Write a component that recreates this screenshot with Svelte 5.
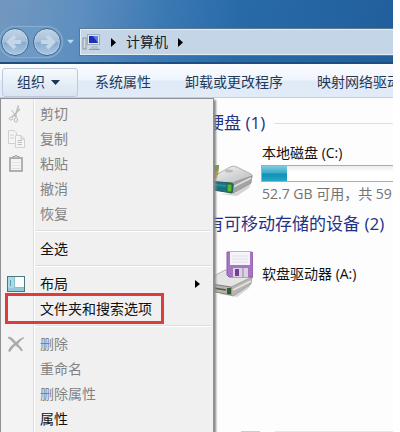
<script>
	let menuOpen = $state(true);

	const menu = [
		{ label: "剪切", icon: "cut", disabled: true },
		{ label: "复制", icon: "copy", disabled: true },
		{ label: "粘贴", icon: "paste", disabled: true },
		{ label: "撤消", disabled: true },
		{ label: "恢复", disabled: true },
		{ separator: true },
		{ label: "全选" },
		{ separator: true },
		{ label: "布局", icon: "layout", submenu: true },
		{ label: "文件夹和搜索选项", marked: true },
		{ separator: true },
		{ label: "删除", icon: "delete", disabled: true },
		{ label: "重命名", disabled: true },
		{ label: "删除属性", disabled: true },
		{ label: "属性" }
	];

	const commands = ["系统属性", "卸载或更改程序", "映射网络驱动"];

	let used = $state(19);
</script>

<div class="window">
	<header class="titlebar">
		<div class="nav-buttons">
			<button class="round" aria-label="后退">
				<svg width="20" height="20" viewBox="0 0 20 20"><path d="M10 4 L4 10 L10 16 M5 10 H16" /></svg>
			</button>
			<button class="round" aria-label="前进">
				<svg width="20" height="20" viewBox="0 0 20 20"><path d="M10 4 L16 10 L10 16 M15 10 H4" /></svg>
			</button>
		</div>
		<button class="history" aria-label="最近的页面">
			<svg width="9" height="6" viewBox="0 0 9 6"><path d="M0.5 0.5 H8.5 L4.5 5 Z" fill="#b9dcf3" stroke="#5c8fbd" stroke-width="0.6" /></svg>
		</button>
		<nav class="address">
			<svg width="19" height="18" viewBox="0 0 19 18">
				<rect x="1" y="5" width="3" height="11" fill="#d8dcd8" stroke="#7b8790" stroke-width="0.8" />
				<path d="M10 13 h5 l2 3 h-9 z" fill="#b5bfc8" />
				<rect x="5.5" y="1.5" width="12" height="10" fill="#dbe5ed" stroke="#9dacbd" />
				<rect x="7" y="3" width="9" height="7" fill="#1d2fb4" />
				<path d="M11 3 h5 v7 z" fill="#5c80e2" />
				<path d="M7 16.5 h11" stroke="#8f9ca8" />
			</svg>
			<svg width="5" height="9" viewBox="0 0 5 9"><path d="M0 0 L5 4.5 L0 9 Z" /></svg>
			<a href="#computer">计算机</a>
			<svg width="5" height="9" viewBox="0 0 5 9"><path d="M0 0 L5 4.5 L0 9 Z" /></svg>
		</nav>
	</header>

	<div class="toolbar">
		<button class="organize" aria-expanded={menuOpen} onclick={() => (menuOpen = !menuOpen)}>
			组织
			<svg width="9" height="5" viewBox="0 0 9 5"><path d="M0 0 H9 L4.5 5 Z" fill="#1d3554" /></svg>
		</button>
		{#each commands as command}
			<button class="command">{command}</button>
		{/each}
	</div>

	<main class="content">
		<section>
			<h2>硬盘 (1)<span class="rule"></span></h2>
			<div class="drive">
				<svg width="48" height="48" viewBox="0 0 48 48">
					<defs>
						<linearGradient id="metal" x1="0" y1="0" x2="1" y2="1">
							<stop offset="0" stop-color="#fafafa" />
							<stop offset="1" stop-color="#b5b8ba" />
						</linearGradient>
					</defs>
					<path d="M14 44 L31 43 L47 31 L44 38 L32 46 Z" fill="#d4d4d4" />
					<path d="M2 30 L25 17 Q28 15 32 17 L46 24 Q48 25 47 27 L27 34 L2 33 Z" fill="url(#metal)" stroke="#979a9c" stroke-width="0.7" />
					<path d="M27 33 L47 26 L46 33 L29 43 L26 43 Z" fill="#a2a4a6" stroke="#77797b" stroke-width="0.5" />
					<path d="M28 37 L46 28" stroke="#dfe0e1" stroke-width="1.5" />
					<path d="M2 31 L27 33 Q29 34 28 37 L27 43 L2 39 Z" fill="#197184" stroke="#285c65" />
					<path d="M3 34 L21 36" stroke="#2b8f9a" stroke-width="2" />
					<rect x="22" y="34" width="5" height="8" rx="1" fill="#57ba36" stroke="#23682b" />
					<ellipse cx="24" cy="21" rx="4" ry="1.5" fill="#bbb" />
					<path d="M1 16 L14 15 L13 25 L2 28 Z" fill="#668c2d" />
					<path d="M7 16 L14 15 L13 21 L7 22 Z" fill="#7f9c45" />
					<path d="M7 23 L13 21 L12 28 L7 29 Z" fill="#d9a13a" />
				</svg>
				<div class="info">
					<div class="name">本地磁盘 (C:)</div>
					<div class="usage"><div class="used" style="width: {used}%"></div></div>
					<div class="free">52.7 GB 可用，共 59</div>
				</div>
			</div>
		</section>
		<section>
			<h2>有可移动存储的设备 (2)</h2>
			<div class="drive floppy">
				<svg width="48" height="48" viewBox="0 0 48 48">
					<path d="M14 44 L31 43 L47 31 L44 38 L32 47 Z" fill="#d6d6d6" />
					<path d="M0 31 L20 20 L34 20 L47 26 Q48 28 46 29 L27 38 L0 34 Z" fill="#e3e4e3" stroke="#989898" stroke-width="0.7" />
					<path d="M26 37 L47 27 L46 34 L28 46 L25 45 Z" fill="#b6b5b0" stroke="#888" stroke-width="0.6" />
					<path d="M28 40 L46 31" stroke="#e5e5df" stroke-width="1.5" />
					<path d="M0 33 L26 37 L26 45 L0 40 Z" fill="#b5b4aa" stroke="#7e7e77" />
					<path d="M2 37 L21 40" stroke="#555852" stroke-width="1.5" />
					<rect x="22" y="38" width="4" height="6" fill="#315b30" />
					<path d="M22 2 H46 Q48 2 48 4 V27 H24 L22 25 Z" fill="#a676c4" stroke="#8a5aab" />
					<rect x="25" y="2" width="20" height="13" fill="#f5f3f8" />
					<path d="M27 6 H43 M27 9 H43 M27 12 H43" stroke="#e3dfe8" />
					<rect x="28" y="18" width="15" height="9" fill="#d8d3df" />
					<rect x="30" y="19" width="4" height="7" fill="#714095" />
					<path d="M38 18 V27" stroke="#a07dba" />
				</svg>
				<div class="info"><div class="name">软盘驱动器 (A:)</div></div>
			</div>
		</section>

		{#if menuOpen}
			<div class="menu" role="menu">
				{#each menu as item}
					{#if item.separator}
						<div class="separator" role="separator"></div>
					{:else}
						<button class="item" class:marked={item.marked} role="menuitem" disabled={item.disabled}>
							<span class="icon">
								{#if item.icon === "cut"}
									<svg width="20" height="20" viewBox="0 0 20 20" fill="none" stroke="#bdbdbd">
										<path d="M12.5 1.500 L9 13 M14 5 L6 13" stroke-width="1.6" />
										<path d="M5.500 6 L11 13" />
										<ellipse cx="5" cy="14.500" rx="1.800" ry="1.500" />
										<ellipse cx="10" cy="16" rx="1.600" ry="2.200" />
									</svg>
								{:else if item.icon === "copy"}
									<svg width="20" height="20" viewBox="0 0 20 20" fill="#f5f5f5" stroke="#d0d0d0">
										<path d="M2.5 1.5 H8 L10.5 4 V14.5 H2.5 Z" />
										<path d="M4 6 H8 M4 9 H8" />
										<path d="M9.5 6.5 H15 L18.5 10 V18.5 H9.5 Z" />
										<path d="M15 7 V10 H18 M11.5 11.5 H16 M11.5 13.5 H16 M11.5 15.5 H16" stroke="#c0c0c0" />
									</svg>
								{:else if item.icon === "paste"}
									<svg width="20" height="20" viewBox="0 0 20 20" fill="none" stroke="#9f9f9f">
										<rect x="4" y="4" width="12" height="13" fill="#f4f4f4" stroke-width="1.6" />
										<path d="M7 4 V2.5 H9 L10 1 L11 2.5 H13 V4 Z" fill="#ddd" />
										<path d="M6 8.5 H14 M6 11.5 H14 M6 14.5 H14" stroke="#e2e2e2" />
									</svg>
								{:else if item.icon === "layout"}
									<svg width="20" height="18" viewBox="0 0 20 18">
										<rect x="1.5" y="1.5" width="17" height="15" fill="#fbfeff" stroke="#467886" />
										<rect x="2" y="2" width="6" height="14" fill="#a6dce8" />
										<rect x="2" y="13" width="16" height="3" fill="#94c9d7" />
										<path d="M8.5 2 V13 M8 12.5 H18" stroke="#8fbccb" />
										<path d="M4.5 5 V11" stroke="#5f9bac" />
									</svg>
								{:else if item.icon === "delete"}
									<svg width="20" height="20" viewBox="0 0 20 20" fill="#ababab">
										<path d="M2 3 Q5 2 10 8 Q14 4 18 3 L18 4 Q14 7 12 10 Q16 14 17 17 L15 17 Q12 13 9.5 11.5 Q6 14 4 18 L2 17 Q4 12 8 9.5 Q5 6 2 4 Z" />
									</svg>
								{/if}
							</span>
							<span class="label">{item.label}</span>
							{#if item.submenu}
								<svg class="more" width="5" height="8" viewBox="0 0 5 8"><path d="M0 0 L5 4 L0 8 Z" /></svg>
							{/if}
						</button>
					{/if}
				{/each}
			</div>
		{/if}
	</main>
	<footer class="details"></footer>
</div>

<style>
	:global(body) { margin: 0; background: #fff; }

	.window {
		display: flex;
		flex-direction: column;
		height: 100vh;
		margin-right: 7px;
		overflow: hidden;
		background: #fdfdfd;
		font-family: "Open Sans", "Noto Sans CJK SC", sans-serif;
		font-size: 14px;
		line-height: 20px;
		white-space: nowrap;
	}

	button {
		margin: 0;
		padding: 0;
		border: 0;
		background: none;
		font: inherit;
		color: inherit;
	}
	svg { display: block; flex: none; }

	/* Titelbalk */
	.titlebar {
		display: flex;
		align-items: center;
		box-sizing: border-box;
		height: 64px;
		padding-top: 22px;
		border-bottom: 2px solid #1c4f80;
		background: linear-gradient(100deg, #7398bf 0, #5e8fc0 20%, #3a78b3 42%, #286aa8 60%, #215f9b 100%);
	}
	.nav-buttons {
		display: flex;
		gap: 4px;
		padding: 1px;
		border-radius: 15px;
		background: #6c9ac5;
		box-shadow: 0 0 1px 1px #8bb1d4;
	}
	.round {
		display: flex;
		align-items: center;
		justify-content: center;
		box-sizing: border-box;
		width: 28px;
		height: 28px;
		border: 1px solid #41698f;
		border-radius: 50%;
		background: linear-gradient(#c2d4e5, #a5bfd8 48%, #8aaccc 52%, #a9c9e2);
		box-shadow: inset 0 0 1px 1px #bdd3e6;
	}
	.round path { fill: none; stroke: #c3d7e8; stroke-width: 4; }
	.history { padding: 0 4px; }
	.address {
		display: flex;
		flex: 1;
		align-items: center;
		gap: 10px;
		box-sizing: border-box;
		height: 28px;
		padding-left: 2px;
		border: 1px solid #5c7891;
		border-right: 0;
		background: #c3d5e6;
		box-shadow: inset 1px 1px #e2edf6, inset 0 -1px #e2edf6;
	}
	.address a { color: #14202c; text-decoration: none; }

	/* Opdrachtbalk */
	.toolbar {
		display: flex;
		align-items: center;
		box-sizing: border-box;
		height: 34px;
		padding: 3px 0 0 2px;
		border-bottom: 1px solid #c3cedd;
		background: linear-gradient(#fbfdff, #eff5fc 48%, #e0eaf7 52%, #e2ecf8);
		color: #1e395b;
	}
	.organize {
		display: flex;
		align-items: center;
		gap: 6px;
		box-sizing: border-box;
		height: 29px;
		padding: 0 17px 0 14px;
		border: 1px solid #bccadb;
		border-radius: 3px;
		background: linear-gradient(#f7fafd, #e6eef7 50%, #dae5f2);
	}
	.command { padding: 0 17px; }

	/* Inhoud */
	.content {
		position: relative;
		flex: 1;
		padding: 13px 0 0 205px;
	}
	h2 {
		display: flex;
		align-items: center;
		gap: 9px;
		margin: 0;
		padding-left: 2px;
		font-size: 17px;
		line-height: 24px;
		font-weight: 400;
		color: #1e3287;
	}
	.rule { flex: 1; height: 1px; background: #dcdfe5; }
	.drive {
		display: flex;
		align-items: center;
		gap: 8px;
		height: 77px;
	}
	.floppy { height: 76px; }
	.info { flex: 1; }
	.name { padding-left: 1px; color: #111; }
	.usage {
		box-sizing: border-box;
		height: 17px;
		margin: 2px 0;
		border: 1px solid #a9adb0;
		border-right: 0;
		background: linear-gradient(#ececec, #fff 40%);
	}
	.used { height: 100%; background: linear-gradient(#7dcbe0, #37a9c9 48%, #118fb4 52%, #26a6c8); }
	.free { padding-left: 1px; color: #737373; }

	.details {
		height: 1px;
		margin-left: 241px;
		background: linear-gradient(90deg, #c5dd9c 19px, #fdfdfd 19px, #fdfdfd 34px, #e6e6e6 34px);
	}

	/* Menu */
	.menu {
		position: absolute;
		top: 0;
		bottom: -1px;
		left: 0;
		box-sizing: border-box;
		width: 214px;
		padding: 2px;
		border: 1px solid #8f9194;
		border-bottom: 0;
		background: linear-gradient(90deg, #f3f3f3 32px, #dfdfdf 32px, #dfdfdf 33px, #fff 33px, #fff 34px, #f0f0f0 34px);
		box-shadow: 2px 2px 2px #888;
		overflow: hidden;
	}
	.item {
		display: flex;
		align-items: center;
		width: 100%;
		height: 25px;
		text-align: left;
		color: #111;
	}
	.item:disabled { color: #838383; }
	.icon {
		display: flex;
		justify-content: center;
		width: 26px;
	}
	.label { flex: 1; padding-left: 11px; }
	.more { margin-right: 11px; }
	.separator {
		height: 1px;
		margin: 4px 0 4px 32px;
		border-bottom: 1px solid #fff;
		background: #dedede;
	}
	.marked { position: relative; }
	.marked::after {
		content: "";
		position: absolute;
		top: -3px;
		left: 2px;
		box-sizing: border-box;
		width: 159px;
		height: 31px;
		border: 3px solid #dc3c3c;
	}
</style>
